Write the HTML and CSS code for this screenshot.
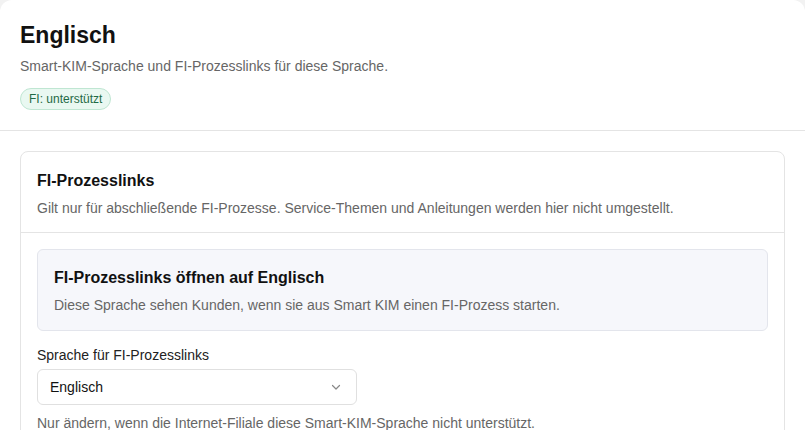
FILE: index.html
```html
<!DOCTYPE html>
<html lang="de">
<head>
    <meta charset="UTF-8">
    <meta name="viewport" content="width=device-width, initial-scale=1.0">
    <title>Englisch | Sprache</title>
    <link rel="stylesheet" href="styles.css">
</head>
<body>

    <div class="panel">
        <div class="panel-header">
            <h2>Englisch</h2>
            <p class="subtitle">Smart-KIM-Sprache und FI-Prozesslinks für diese Sprache.</p>
            <span class="badge">FI: unterstützt</span>
        </div>

        <div class="panel-body">
            <div class="card">
                <div class="card-header">
                    <h3>FI-Prozesslinks</h3>
                    <p class="hint">Gilt nur für abschließende FI-Prozesse. Service-Themen und Anleitungen werden hier nicht umgestellt.</p>
                </div>

                <div class="card-body">
                    <div class="info-box">
                        <h4>FI-Prozesslinks öffnen auf Englisch</h4>
                        <p class="hint">Diese Sprache sehen Kunden, wenn sie aus Smart KIM einen FI-Prozess starten.</p>
                    </div>

                    <div class="form-group">
                        <label for="fiLanguage">Sprache für FI-Prozesslinks</label>
                        <div class="select-wrap">
                            <select id="fiLanguage">
                                <option value="en" selected>Englisch</option>
                                <option value="de">Deutsch</option>
                                <option value="fr">Französisch</option>
                            </select>
                            <svg class="chevron" width="12" height="12" viewBox="0 0 12 12">
                                <path d="M2.5 4.5 L6 8 L9.5 4.5" fill="none" stroke="#888" stroke-width="1.2" stroke-linecap="round" stroke-linejoin="round"/>
                            </svg>
                        </div>
                        <p class="hint">Nur ändern, wenn die Internet-Filiale diese Smart-KIM-Sprache nicht unterstützt.</p>
                    </div>
                </div>
            </div>
        </div>
    </div>

</body>
</html>
```

FILE: styles.css
```css
body {
    margin: 0;
    background: #f2f2f2;
    font-family: "Liberation Sans", Arial, sans-serif;
    color: #111;
    height: 430px;
    overflow: hidden;
}

.panel {
    background: #fff;
    border-radius: 12px 12px 0 0;
    min-height: 430px;
}

.panel-header {
    padding: 20px 20px 20px;
    border-bottom: 1px solid #e4e4e4;
}

.panel-header h2 {
    margin: 0;
    font-size: 23px;
    line-height: 31px;
    font-weight: bold;
}

.subtitle {
    margin: 5px 0 12px;
    font-size: 14px;
    line-height: 20px;
    color: #666;
}

.badge {
    display: inline-block;
    font-size: 12px;
    line-height: 20px;
    padding: 0 8px;
    color: #1f6a45;
    background: #e9f8f1;
    border: 1px solid #bfe6d2;
    border-radius: 11px;
}

.panel-body {
    padding: 20px;
}

.card {
    border: 1px solid #e4e4e4;
    border-radius: 8px;
}

.card-header {
    padding: 19px 16px 14px;
    border-bottom: 1px solid #e4e4e4;
}

.card-header h3 {
    margin: 0;
    font-size: 16px;
    line-height: 20px;
}

.hint {
    margin: 7px 0 0;
    font-size: 14px;
    line-height: 20px;
    color: #666;
}

.card-body {
    padding: 16px;
}

.info-box {
    background: #f6f7fb;
    border: 1px solid #e3e5ec;
    border-radius: 6px;
    padding: 17px 16px 15px;
}

.info-box h4 {
    margin: 0;
    font-size: 16px;
    line-height: 22px;
}

.info-box .hint {
    margin-top: 6px;
}

.form-group {
    margin-top: 15px;
}

label {
    display: block;
    font-size: 14px;
    line-height: 18px;
    color: #222;
}

.select-wrap {
    position: relative;
    width: 320px;
    margin-top: 5px;
}

select {
    appearance: none;
    display: block;
    width: 100%;
    height: 36px;
    padding: 0 12px;
    font-family: inherit;
    font-size: 14px;
    color: #111;
    background: #fff;
    border: 1px solid #e0e0e0;
    border-radius: 6px;
}

.chevron {
    position: absolute;
    right: 15px;
    top: 12px;
    pointer-events: none;
}

.form-group .hint {
    margin-top: 8px;
}
```
